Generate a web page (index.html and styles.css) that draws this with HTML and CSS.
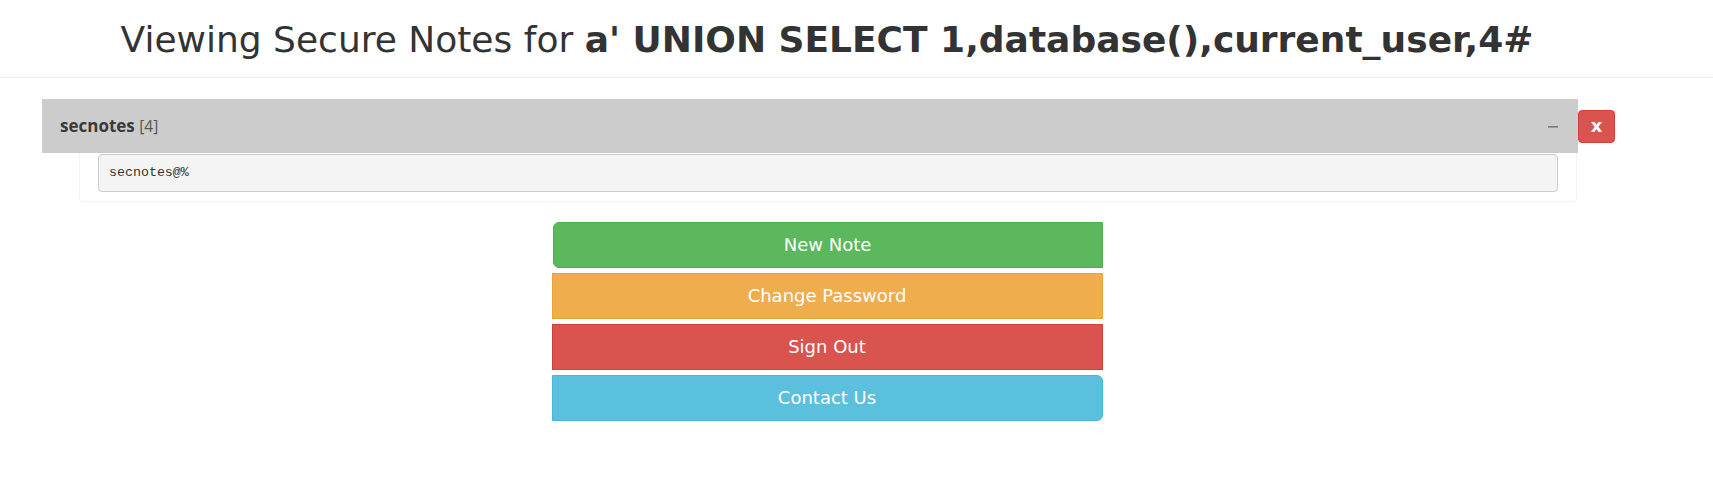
FILE: index.html
```html
<!DOCTYPE html>
<html lang="en">
<head>
<meta charset="utf-8">
<title>Secure Notes</title>
<link rel="stylesheet" href="styles.css">
</head>
<body>
<header class="page-header">
  <div class="wrap">
    <h1 class="title">Viewing Secure Notes for <strong>a' UNION SELECT 1,database(),current_user,4#</strong></h1>
  </div>
</header>
<main class="wrap">
  <section class="note-row">
    <div class="panel">
      <div class="panel-heading">
        <span class="panel-title"><b>secnotes</b> <small class="count">[4]</small></span>
        <svg class="minus" width="10" height="4" viewBox="0 0 10 4"><rect x="0" y="1" width="10" height="1.6" fill="#7a7a7a"/></svg>
      </div>
      <div class="panel-body">
        <pre class="note">secnotes@%</pre>
      </div>
    </div>
    <button class="btn-x">x</button>
  </section>
  <nav class="actions">
    <a class="btn btn-green first">New Note</a>
    <a class="btn btn-orange">Change Password</a>
    <a class="btn btn-red">Sign Out</a>
    <a class="btn btn-blue last">Contact Us</a>
  </nav>
</main>
</body>
</html>
```
FILE: styles.css
```css
html, body {
  margin: 0;
  padding: 0;
  background: #fff;
}
body {
  font-family: "DejaVu Sans", sans-serif;
  color: #333;
  font-size: 14px;
}
.wrap {
  width: 1654px;
}
.page-header {
  padding-top: 20px;
  padding-bottom: 17px;
  border-bottom: 1px solid #eeeeee;
}
.title {
  margin: 0;
  font-size: 36px;
  line-height: 39.6px;
  font-weight: 400;
  text-align: center;
  white-space: nowrap;
}
.title strong {
  font-weight: 700;
}
.note-row {
  display: flex;
  align-items: flex-start;
  margin-top: 21px;
  margin-left: 42px;
}
.panel {
  width: 1536px;
}
.panel-heading {
  height: 54px;
  background: #cccccc;
  display: flex;
  align-items: center;
  justify-content: space-between;
  padding: 0 20px 0 18px;
  box-sizing: border-box;
}
.panel-title {
  font-family: "Open Sans", sans-serif;
  font-size: 17px;
  color: #3a3a3a;
}
.panel-title b {
  font-weight: 700;
}
.count {
  font-family: "Open Sans", sans-serif;
  font-size: 15.5px;
  color: #555;
}
.minus {
  display: block;
  margin-top: 2px;
}
.panel-body {
  margin: 0 1px 0 37px;
  border: 1px solid #f3f3f3;
  border-top: none;
  border-radius: 0 0 4px 4px;
  padding: 1px 18px 9px 18px;
}
.note {
  margin: 0;
  padding: 9px 10px;
  font-family: "Liberation Mono", monospace;
  font-size: 13.3px;
  line-height: 18px;
  color: #333;
  background: #f4f4f4;
  border: 1px solid #cccccc;
  border-radius: 4px;
}
.btn-x {
  margin-top: 11px;
  width: 37px;
  height: 33px;
  padding: 0;
  background: #d9534f;
  border: 1px solid #d43f3a;
  border-radius: 4px;
  color: #fff;
  font-family: "DejaVu Sans", sans-serif;
  font-weight: 700;
  font-size: 18px;
  line-height: 28px;
}
.actions {
  display: flex;
  flex-direction: column;
  gap: 5px;
  width: 551px;
  margin: 20px auto 0;
}
.btn {
  display: block;
  box-sizing: border-box;
  height: 46px;
  padding: 10px 16px;
  font-size: 18px;
  line-height: 24px;
  text-align: center;
  color: #fff;
  border: 1px solid transparent;
}
.btn-green { background: #5cb85c; border-color: #4cae4c; }
.btn-orange { background: #f0ad4e; border-color: #eea236; }
.btn-red { background: #d9534f; border-color: #d43f3a; }
.btn-blue { background: #5bc0de; border-color: #46b8da; }
.first {
  margin-left: 1px;
  border-radius: 6px 0 0 6px;
}
.last {
  border-radius: 0 6px 6px 0;
}
```
